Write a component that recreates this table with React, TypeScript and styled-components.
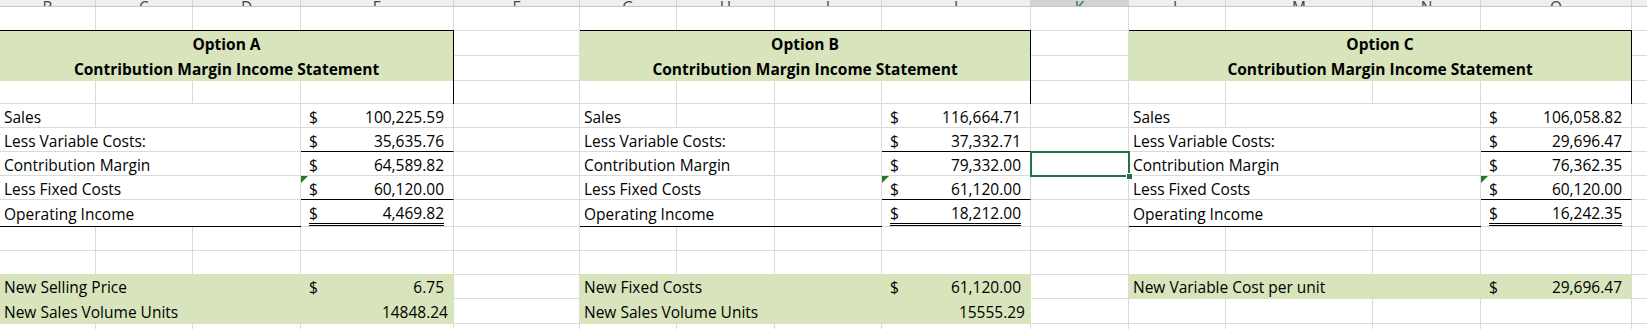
import styled, { createGlobalStyle } from "styled-components";

// Sheet geometry (px), columns B..P and rows 1..14
const COLS = [96, 97, 108, 153, 126, 97, 98, 107, 149, 98, 97, 147, 108, 151, 97];
const ROWS = [24, 25, 25, 23, 24, 24, 24, 24, 27, 24, 24, 24, 25, 24];
const LETTERS = ["B", "C", "D", "E", "F", "G", "H", "I", "J", "K", "L", "M", "N", "O", "P"];

const GREEN = "#d8e4bc";
const GRID = "#dadada";
const EXCEL = "#217346";

type Extra = { label: string; amount?: string; plain?: string };

type Option = {
  name: string;
  col: number;
  midLine: boolean;
  amounts: string[];
  extras: Extra[];
};

const LABELS = [
  "Sales",
  "Less Variable Costs:",
  "Contribution Margin",
  "Less Fixed Costs",
  "Operating Income",
];

const OPTIONS: Option[] = [
  {
    name: "Option A",
    col: 1,
    midLine: false,
    amounts: ["100,225.59", "35,635.76", "64,589.82", "60,120.00", "4,469.82"],
    extras: [
      { label: "New Selling Price", amount: "6.75" },
      { label: "New Sales Volume Units", plain: "14848.24" },
    ],
  },
  {
    name: "Option B",
    col: 6,
    midLine: true,
    amounts: ["116,664.71", "37,332.71", "79,332.00", "61,120.00", "18,212.00"],
    extras: [
      { label: "New Fixed Costs", amount: "61,120.00" },
      { label: "New Sales Volume Units", plain: "15555.29" },
    ],
  },
  {
    name: "Option C",
    col: 11,
    midLine: false,
    amounts: ["106,058.82", "29,696.47", "76,362.35", "60,120.00", "16,242.35"],
    extras: [{ label: "New Variable Cost per unit", amount: "29,696.47" }],
  },
];

const GlobalStyle = createGlobalStyle`
  *, *::before, *::after { box-sizing: border-box; }
  body { margin: 0; background: #fff; overflow: hidden; }
  #root { width: 1647px; height: 329px; overflow: hidden; }
`;

// Styled
const Workbook = styled.div`
  font-family: "Open Sans", Lato, "Liberation Sans", sans-serif;
  font-size: 15.5px;
  color: #000;
  background: #fff;
`;
const ColumnHeads = styled.div`
  display: grid;
  grid-template-columns: ${COLS.map((w) => `${w}px`).join(" ")};
  height: 7px;
  background: #efefef;
  border-bottom: 1px solid #c6c6c6;
  overflow: hidden;
`;
const ColumnHead = styled.div<{ $active?: boolean }>`
  display: flex;
  align-items: flex-end;
  justify-content: center;
  border-right: 1px solid #d4d4d4;
  background: ${({ $active }) => ($active ? "#d2d2d2" : "transparent")};
  border-bottom: ${({ $active }) => ($active ? `2px solid ${EXCEL}` : "none")};
  color: ${({ $active }) => ($active ? EXCEL : "#444")};
  span {
    line-height: 15px;
    margin-bottom: ${({ $active }) => ($active ? "-1px" : "1px")};
  }
`;
const Sheet = styled.div`
  display: grid;
  grid-template-columns: ${COLS.map((w) => `${w}px`).join(" ")};
  grid-template-rows: ${ROWS.map((h) => `${h}px`).join(" ")};
`;
const Cell = styled.div<{
  $row: number;
  $col: number;
  $span?: number;
  $fill?: boolean;
  $noRight?: boolean;
  $rule?: boolean;
  $bleed?: boolean;
}>`
  grid-row: ${({ $row }) => $row};
  grid-column: ${({ $col, $span }) => `${$col} / span ${$span ?? 1}`};
  display: flex;
  align-items: center;
  padding: 2px 4px 0;
  white-space: nowrap;
  background: ${({ $fill }) => ($fill ? GREEN : "transparent")};
  border-right: 1px solid
    ${({ $fill, $noRight }) => ($fill || $noRight ? "transparent" : GRID)};
  border-bottom: 1px solid
    ${({ $fill, $rule }) => ($rule ? "#000" : $fill ? "transparent" : GRID)};
  margin-top: ${({ $bleed }) => ($bleed ? "-1px" : "0")};
`;
const Title = styled(Cell)`
  justify-content: center;
  font-weight: 700;
`;
const Amount = styled(Cell)`
  position: relative;
  padding: 2px 9px 0 8px;
`;
const Plain = styled(Cell)`
  justify-content: flex-end;
  padding-right: 5px;
`;
const Money = styled.div<{ $double?: boolean }>`
  flex: 1;
  align-self: stretch;
  display: flex;
  align-items: center;
  justify-content: space-between;
  border-bottom: ${({ $double }) => ($double ? "3px double #000" : "none")};
`;
const ErrorMark = styled.i`
  position: absolute;
  top: 0;
  left: 0;
  width: 0;
  height: 0;
  border-top: 7px solid #1e7b1e;
  border-right: 7px solid transparent;
`;
const Frame = styled.div<{ $col: number }>`
  grid-row: 2 / 10;
  grid-column: ${({ $col }) => `${$col} / span 4`};
  margin: -1px 0 0 -1px;
  border: 1px solid #000;
  pointer-events: none;
`;
const Selection = styled.div<{ $row: number; $col: number }>`
  grid-row: ${({ $row }) => $row};
  grid-column: ${({ $col }) => $col};
  position: relative;
  margin: -1px;
  border: 2px solid ${EXCEL};
  pointer-events: none;
  &::after {
    content: "";
    position: absolute;
    right: -5px;
    bottom: -5px;
    width: 7px;
    height: 7px;
    background: ${EXCEL};
    border: 1px solid #fff;
  }
`;

const range = (from: number, to: number) =>
  Array.from({ length: to - from + 1 }, (_, i) => from + i);

const Group = ({ children }: { children: React.ReactNode }) => <>{children}</>;

const BlankColumn = ({ col }: { col: number }) => (
  <>
    {range(1, ROWS.length).map((r) => (
      <Cell key={r} $row={r} $col={col} />
    ))}
  </>
);

const BlankRow = ({ row, col }: { row: number; col: number }) => (
  <>
    {range(col, col + 3).map((c) => (
      <Cell key={c} $row={row} $col={c} />
    ))}
  </>
);

const Statement = ({ option }: { option: Option }) => {
  const c = option.col;
  return (
    <>
      <BlankRow row={1} col={c} />
      <Title $row={2} $col={c} $span={4} $fill>
        {option.name}
      </Title>
      <Title $row={3} $col={c} $span={4} $fill>
        Contribution Margin Income Statement
      </Title>
      <BlankRow row={4} col={c} />

      {LABELS.map((label, i) => {
        const row = 5 + i;
        return (
          <Group key={label}>
            <Cell $row={row} $col={c} $noRight={i !== 0}>
              {label}
            </Cell>
            <Cell $row={row} $col={c + 1} $noRight={!option.midLine} />
            <Cell $row={row} $col={c + 2} />
            <Amount $row={row} $col={c + 3} $rule={i === 1 || i === 3}>
              {i === 3 && <ErrorMark />}
              <Money $double={i === 4}>
                <span>$</span>
                <span>{option.amounts[i]}</span>
              </Money>
            </Amount>
          </Group>
        );
      })}

      <BlankRow row={10} col={c} />
      <BlankRow row={11} col={c} />

      {[0, 1].map((i) => {
        const row = 12 + i;
        const extra = option.extras[i];
        if (!extra) return <BlankRow key={row} row={row} col={c} />;
        return (
          <Group key={row}>
            <Cell $row={row} $col={c} $span={3} $fill $bleed={i === 0}>
              {extra.label}
            </Cell>
            {extra.amount ? (
              <Amount $row={row} $col={c + 3} $fill $bleed={i === 0}>
                <Money>
                  <span>$</span>
                  <span>{extra.amount}</span>
                </Money>
              </Amount>
            ) : (
              <Plain $row={row} $col={c + 3} $fill>
                {extra.plain}
              </Plain>
            )}
          </Group>
        );
      })}

      <BlankRow row={14} col={c} />
      <Frame $col={c} />
    </>
  );
};

const App = () => {
  return (
    <Workbook>
      <GlobalStyle />
      <ColumnHeads>
        {LETTERS.map((letter) => (
          <ColumnHead key={letter} $active={letter === "K"}>
            <span>{letter}</span>
          </ColumnHead>
        ))}
      </ColumnHeads>
      <Sheet>
        {OPTIONS.map((option) => (
          <Statement key={option.name} option={option} />
        ))}
        <BlankColumn col={5} />
        <BlankColumn col={10} />
        <BlankColumn col={15} />
        <Selection $row={7} $col={10} />
      </Sheet>
    </Workbook>
  );
};

export default App;
